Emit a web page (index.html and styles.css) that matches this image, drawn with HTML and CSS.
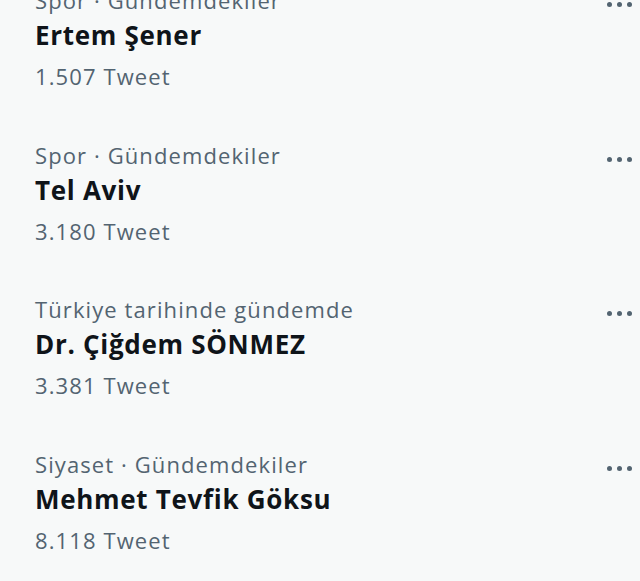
FILE: index.html
```html
<!DOCTYPE html>
<html lang="tr">
<head>
<meta charset="utf-8">
<link rel="stylesheet" href="styles.css">
</head>
<body>
<div class="list">
  <div class="trend">
    <div class="body">
      <div class="meta">Spor · Gündemdekiler</div>
      <div class="title">Ertem Şener</div>
      <div class="count">1.507 Tweet</div>
    </div>
    <div class="more"><span></span><span></span><span></span></div>
  </div>
  <div class="trend">
    <div class="body">
      <div class="meta">Spor · Gündemdekiler</div>
      <div class="title">Tel Aviv</div>
      <div class="count">3.180 Tweet</div>
    </div>
    <div class="more"><span></span><span></span><span></span></div>
  </div>
  <div class="trend">
    <div class="body">
      <div class="meta">Türkiye tarihinde gündemde</div>
      <div class="title">Dr. Çiğdem SÖNMEZ</div>
      <div class="count">3.381 Tweet</div>
    </div>
    <div class="more"><span></span><span></span><span></span></div>
  </div>
  <div class="trend">
    <div class="body">
      <div class="meta">Siyaset · Gündemdekiler</div>
      <div class="title">Mehmet Tevfik Göksu</div>
      <div class="count">8.118 Tweet</div>
    </div>
    <div class="more"><span></span><span></span><span></span></div>
  </div>
</div>
</body>
</html>
```
FILE: styles.css
```css
html, body {
  margin: 0;
  padding: 0;
  background: #f7f9f9;
  overflow: hidden;
}
body {
  font-family: "Open Sans", "Liberation Sans", Arial, sans-serif;
  width: 640px;
  height: 581px;
}
.list {
  margin-top: -39px;
  display: flex;
  flex-direction: column;
}
.trend {
  display: flex;
  justify-content: space-between;
  align-items: flex-start;
  height: 154.7px;
  box-sizing: border-box;
  padding: 23px 8px 0 35px;
}
.body {
  display: flex;
  flex-direction: column;
}
.meta {
  font-size: 22px;
  line-height: 32px;
  letter-spacing: 1.1px;
  color: #536471;
}
.title {
  font-size: 26px;
  line-height: 38px;
  font-weight: bold;
  letter-spacing: 0.7px;
  color: #0f1419;
}
.count {
  margin-top: 6px;
  font-size: 22px;
  line-height: 32px;
  letter-spacing: 1.1px;
  color: #536471;
}
.more {
  display: flex;
  gap: 5px;
  margin-top: 18px;
}
.more span {
  width: 5px;
  height: 5px;
  border-radius: 50%;
  background: #536471;
}
```
